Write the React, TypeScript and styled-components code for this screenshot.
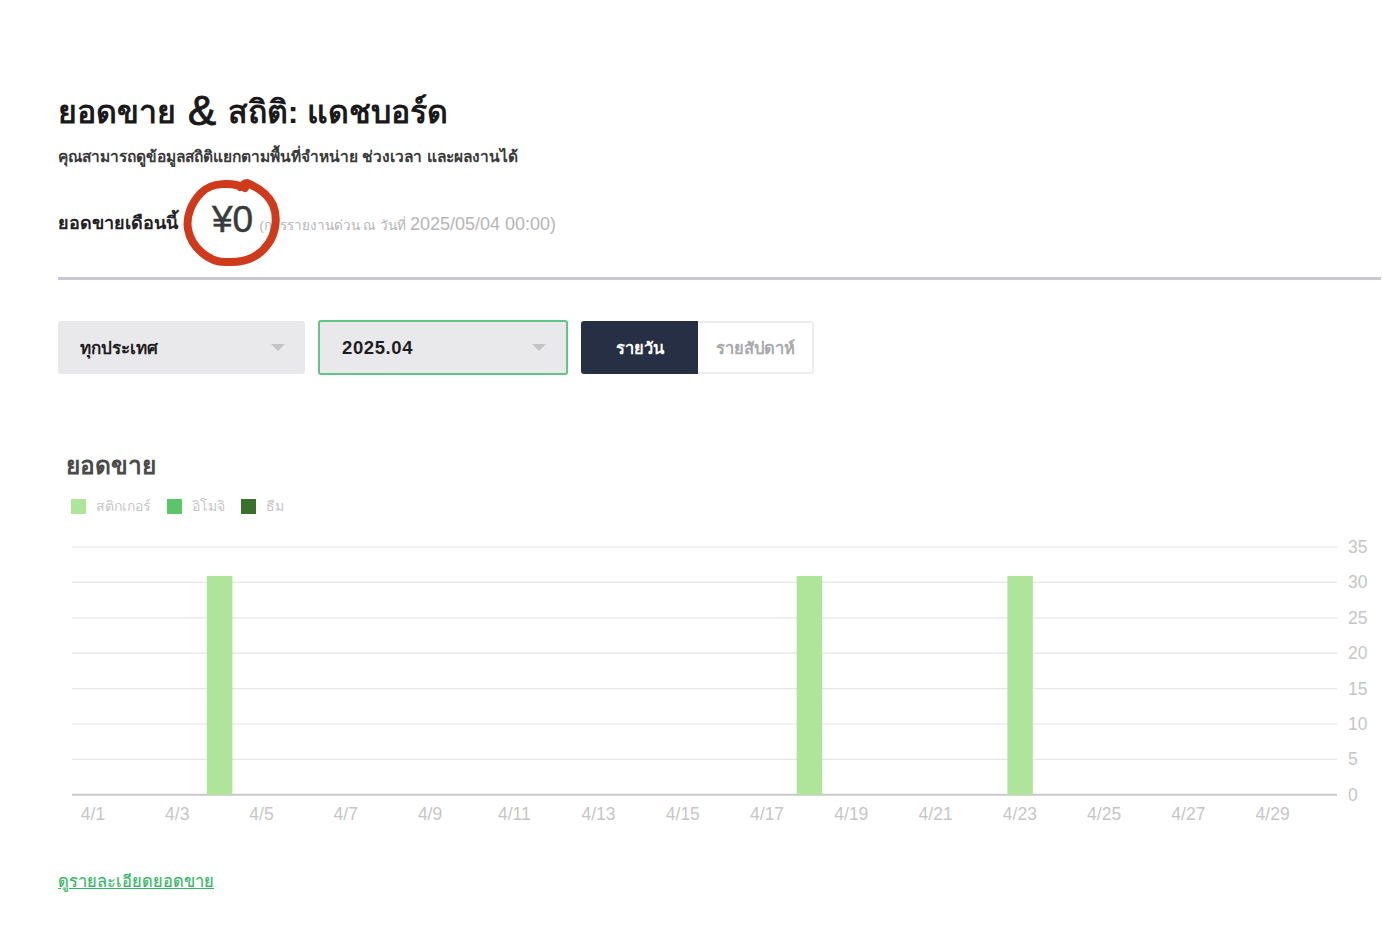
import { createGlobalStyle, styled } from "styled-components";

const GlobalStyle = createGlobalStyle`
    html, body {
        margin: 0;
        padding: 0;
        background: #fff;
        font-family: "Liberation Sans", "Noto Sans", Arial, sans-serif;
    }
`;

const yTicks = [35, 30, 25, 20, 15, 10, 5, 0];
const xTicks = ["4/1", "4/3", "4/5", "4/7", "4/9", "4/11", "4/13", "4/15", "4/17", "4/19", "4/21", "4/23", "4/25", "4/27", "4/29"];
const barDays = [4, 18, 23];

const legend = [
    { label: "สติกเกอร์", color: "#aee59a" },
    { label: "อิโมจิ", color: "#5cc469" },
    { label: "ธีม", color: "#38702c" },
];

function SalesChart() {
    const left = 72;
    const right = 1337;
    const top = 12;
    const rowH = 35.4;
    const baseY = top + rowH * 7;
    const dayW = 42.13;

    return (
        <ChartSvg viewBox="0 0 1382 300" width="1382" height="300">
            {yTicks.map((tick, i) => {
                const y = top + rowH * i;
                return (
                    <g key={tick}>
                        <line x1={left} x2={right} y1={y} y2={y} stroke={tick === 0 ? "#c9c9c9" : "#e6e6e6"} strokeWidth={tick === 0 ? 2 : 1.2} />
                        <text x={1348} y={y + 6} fontSize="17.5" fill="#c6c6c6">{tick}</text>
                    </g>
                );
            })}
            {barDays.map((day) => (
                <rect key={day} x={93 + (day - 1) * dayW - 12.5} y={41} width={25.5} height={baseY - 41} fill="#aee59a" />
            ))}
            {xTicks.map((tick, i) => (
                <text key={tick} x={93 + i * 2 * dayW} y={285} fontSize="17.5" fill="#c6c6c6" textAnchor="middle">{tick}</text>
            ))}
        </ChartSvg>
    );
}

export default function App() {
    return (
        <Page>
            <GlobalStyle />
            <Header>
                <Title>ยอดขาย <Ampersand>&amp;</Ampersand> สถิติ: แดชบอร์ด</Title>
                <Description>คุณสามารถดูข้อมูลสถิติแยกตามพื้นที่จำหน่าย ช่วงเวลา และผลงานได้</Description>
                <SummaryRow>
                    <SummaryLabel>ยอดขายเดือนนี้</SummaryLabel>
                    <Amount>
                        ¥0
                        <CircleMark viewBox="0 0 100 88" width="100" height="88" fill="none">
                            <path
                                d="M62 9 C50 3 28 3 18 14 C8 24 3 38 5 50 C8 68 26 84 44 83 C62 84 76 78 85 65 C93 54 95 38 90 26 C85 15 74 8 64 4 C61 4 59 7 57 8"
                                stroke="#cf3a1c"
                                strokeWidth="8"
                                strokeLinecap="round"
                                strokeLinejoin="round"
                            />
                        </CircleMark>
                    </Amount>
                    <SummaryNote>
                        (การรายงานด่วน ณ วันที่ <NoteDate>2025/05/04 00:00)</NoteDate>
                    </SummaryNote>
                </SummaryRow>
            </Header>
            <Toolbar>
                <Select>
                    ทุกประเทศ
                    <Caret />
                </Select>
                <Select $active>
                    <SelectValue>2025.04</SelectValue>
                    <Caret />
                </Select>
                <Toggle>
                    <ToggleButton $selected>รายวัน</ToggleButton>
                    <ToggleButton>รายสัปดาห์</ToggleButton>
                </Toggle>
            </Toolbar>
            <ChartSection>
                <ChartTitle>ยอดขาย</ChartTitle>
                <Legend>
                    {legend.map((item) => (
                        <LegendItem key={item.label}>
                            <Swatch $color={item.color} />
                            {item.label}
                        </LegendItem>
                    ))}
                </Legend>
                <SalesChart />
            </ChartSection>
            <DetailLink href="#">ดูรายละเอียดยอดขาย</DetailLink>
        </Page>
    );
}

const Page = styled.div`
    width: 1382px;
    height: 944px;
    overflow: hidden;
    padding: 92px 0 0 58px;
    box-sizing: border-box;
`;

const Header = styled.div`
    width: 1323px;
    height: 188px;
    box-sizing: border-box;
    border-bottom: 3px solid #c9c8d0;
`;

const Title = styled.h1`
    margin: 0;
    height: 40px;
    font-size: 32px;
    line-height: 40px;
    font-weight: 700;
    color: #1a1a1a;
`;

const Ampersand = styled.span`
    margin: 0 3px;
    font-size: 42px;
    line-height: 0;
    font-weight: 400;
    vertical-align: -2px;
    -webkit-text-stroke: 1px #1a1a1a;
`;

const Description = styled.p`
    margin: 13px 0 0;
    font-size: 15.5px;
    line-height: 24px;
    font-weight: 700;
    color: #3a3a3a;
`;

const SummaryRow = styled.div`
    display: flex;
    align-items: center;
    margin-top: 30px;
    height: 46px;
`;

const SummaryLabel = styled.span`
    font-size: 18px;
    font-weight: 700;
    color: #222;
`;

const Amount = styled.span`
    position: relative;
    margin: 0 0 5px 34px;
    font-size: 37px;
    line-height: 42px;
    color: #3a3a3a;
    -webkit-text-stroke: 0.5px #3a3a3a;
`;

const CircleMark = styled.svg`
    position: absolute;
    left: -29px;
    top: -20px;
`;

const SummaryNote = styled.span`
    margin-left: 6px;
    padding-top: 5px;
    font-size: 13.5px;
    color: #b5b5b5;
`;

const NoteDate = styled.span`
    font-size: 18px;
`;

const Toolbar = styled.div`
    display: flex;
    align-items: center;
    gap: 13px;
    margin-top: 40px;
    height: 55px;
`;

const Select = styled.div<{ $active?: boolean }>`
    position: relative;
    display: flex;
    align-items: center;
    box-sizing: border-box;
    width: ${(p) => (p.$active ? "250px" : "247px")};
    height: ${(p) => (p.$active ? "55px" : "53px")};
    padding-left: 22px;
    background: #e9e9eb;
    border: ${(p) => (p.$active ? "2px solid #62c585" : "none")};
    border-radius: 3px;
    font-size: 17px;
    font-weight: 700;
    color: #1e1e1e;
`;

const SelectValue = styled.span`
    font-size: 18.5px;
    letter-spacing: 0.6px;
`;

const Caret = styled.span`
    position: absolute;
    right: 20px;
    top: 50%;
    margin-top: -4px;
    border-left: 7.5px solid transparent;
    border-right: 7.5px solid transparent;
    border-top: 7px solid #c4c4c6;
`;

const Toggle = styled.div`
    display: flex;
    height: 53px;
`;

const ToggleButton = styled.div<{ $selected?: boolean }>`
    display: flex;
    align-items: center;
    justify-content: center;
    box-sizing: border-box;
    width: ${(p) => (p.$selected ? "117px" : "116px")};
    background: ${(p) => (p.$selected ? "#272f45" : "#fff")};
    border: ${(p) => (p.$selected ? "none" : "2px solid #ededef")};
    border-left: none;
    border-radius: ${(p) => (p.$selected ? "3px 0 0 3px" : "0 3px 3px 0")};
    font-size: 16.5px;
    font-weight: 700;
    color: ${(p) => (p.$selected ? "#fff" : "#a9a9ab")};
`;

const ChartSection = styled.div`
    margin: 77px 0 0 -58px;
`;

const ChartTitle = styled.h2`
    margin: 0 0 0 66px;
    font-size: 24.5px;
    line-height: 28px;
    font-weight: 700;
    color: #4a4a4a;
`;

const Legend = styled.div`
    display: flex;
    gap: 16px;
    margin: 14px 0 0 71px;
    height: 24px;
`;

const LegendItem = styled.div`
    display: flex;
    align-items: center;
    gap: 10px;
    font-size: 14px;
    color: #c6c6c6;
`;

const Swatch = styled.span<{ $color: string }>`
    width: 15px;
    height: 15px;
    background: ${(p) => p.$color};
`;

const ChartSvg = styled.svg`
    display: block;
    margin-top: 17px;

    text {
        font-family: "Liberation Sans", Arial, sans-serif;
    }
`;

const DetailLink = styled.a`
    display: inline-block;
    margin-top: 33px;
    font-size: 16.4px;
    font-weight: 400;
    color: #34b565;
    text-decoration: underline;
    -webkit-text-stroke: 0.2px #34b565;
`;
